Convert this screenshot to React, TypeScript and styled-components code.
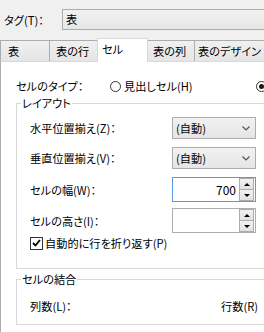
import React from "react";
import styled, { createGlobalStyle } from "styled-components";

const GlobalStyle = createGlobalStyle`
    html, body {
        margin: 0;
        padding: 0;
        background: #f0f0f0;
    }
    body {
        font-family: "Noto Sans CJK JP", "Noto Sans", sans-serif;
        font-size: 11.2px;
        line-height: 16px;
        color: #000;
        font-feature-settings: "palt";
    }
`;

const Window = styled.div`
    width: 264px;
    height: 332px;
    overflow: hidden;
    display: flex;
    flex-direction: column;
    background: #f0f0f0;
`;

const TagRow = styled.div`
    display: flex;
    align-items: center;
    height: 21px;
    margin-top: 9px;
    padding-left: 4px;
`;

const TagLabel = styled.span`
    flex: 0 0 58px;
`;

const TagBox = styled.div`
    flex: 0 0 240px;
    height: 21px;
    box-sizing: border-box;
    border: 1px solid #acacac;
    background: linear-gradient(#f2f2f2, #e6e6e6);
    padding-left: 3px;
    line-height: 19px;
`;

const TabStrip = styled.div`
    display: flex;
    align-items: flex-end;
    height: 23px;
    margin-top: 8px;
    position: relative;
    z-index: 1;
`;

const Tab = styled.div<{ $w: number; $pad: number; $active?: boolean }>`
    flex: 0 0 ${(p) => p.$w}px;
    box-sizing: border-box;
    height: ${(p) => (p.$active ? 24 : 21)}px;
    margin-right: -1px;
    margin-bottom: ${(p) => (p.$active ? -1 : 0)}px;
    padding-left: ${(p) => p.$pad}px;
    border: 1px solid ${(p) => (p.$active ? "#d9d9d9" : "#acacac")};
    border-bottom: none;
    background: ${(p) => (p.$active ? "#fff" : "linear-gradient(#f0f0f0, #e5e5e5)")};
    line-height: ${(p) => (p.$active ? 20 : 21)}px;
    white-space: nowrap;
    position: relative;
    z-index: ${(p) => (p.$active ? 2 : 1)};
`;

const Panel = styled.div`
    flex: 1;
    background: #fff;
    border-top: 1px solid #d9d9d9;
    border-left: 1px solid #acacac;
    padding: 14px 0 0 15px;
    width: 300px;
`;

const TypeRow = styled.div`
    display: flex;
    align-items: center;
    height: 20px;
`;

const TypeLabel = styled.span`
    flex: 0 0 94px;
`;

const RadioOption = styled.label<{ $w?: number }>`
    display: flex;
    align-items: center;
    gap: 3px;
    flex: 0 0 ${(p) => (p.$w ? `${p.$w}px` : "auto")};
`;

const RadioCircle = styled.span<{ $checked?: boolean }>`
    width: 11px;
    height: 11px;
    box-sizing: border-box;
    border: 1px solid #333;
    border-radius: 50%;
    background: #fff;
    display: flex;
    align-items: center;
    justify-content: center;
    &::after {
        content: "";
        display: ${(p) => (p.$checked ? "block" : "none")};
        width: 5px;
        height: 5px;
        border-radius: 50%;
        background: #1a1a1a;
    }
`;

const Group = styled.fieldset<{ $top?: number }>`
    margin: ${(p) => p.$top ?? 0}px 0 0 0;
    padding: 0;
    width: 280px;
    border: 1px solid #d9d9d9;
    min-inline-size: 0;
`;

const Legend = styled.legend`
    margin-left: 4px;
    padding: 0 1px;
    line-height: 14px;
`;

const GroupBody = styled.div<{ $pt: number; $pb: number }>`
    padding: ${(p) => p.$pt}px 0 ${(p) => p.$pb}px 13px;
`;

const FieldRow = styled.div<{ $mt?: number; $cols?: string }>`
    display: grid;
    grid-template-columns: ${(p) => p.$cols ?? "142px 84px"};
    align-items: center;
    margin-top: ${(p) => p.$mt ?? 0}px;
`;

const Select = styled.div`
    height: 22px;
    box-sizing: border-box;
    border: 1px solid #acacac;
    background: linear-gradient(#f2f2f2, #e5e5e5);
    padding-left: 3px;
    display: flex;
    align-items: center;
    justify-content: space-between;
    padding-right: 5px;
`;

const SpinBox = styled.div<{ $focused?: boolean }>`
    height: 25px;
    box-sizing: border-box;
    border: 1px solid ${(p) => (p.$focused ? "#569de5" : "#abadb3")};
    background: #fff;
    display: flex;
    padding: 0 1px 0 0;
`;

const SpinValue = styled.div`
    flex: 1;
    text-align: right;
    padding-right: 3px;
    line-height: 23px;
    font-size: 12px;
`;

const SpinButtons = styled.div`
    flex: 0 0 15px;
    display: flex;
    flex-direction: column;
`;

const SpinButton = styled.div`
    flex: 1;
    box-sizing: border-box;
    border: 1px solid #acacac;
    background: linear-gradient(#f2f2f2, #e2e2e2);
    display: flex;
    align-items: center;
    justify-content: center;
    & + & {
        margin-top: -1px;
    }
`;

const CheckRow = styled.label`
    display: flex;
    align-items: center;
    gap: 2px;
    height: 14px;
    margin-top: 3px;
`;

const CheckBox = styled.span`
    width: 13px;
    height: 13px;
    box-sizing: border-box;
    border: 1px solid #333;
    background: #fff;
    display: flex;
    align-items: center;
    justify-content: center;
`;

const Chevron = () => (
    <svg width="8" height="5" viewBox="0 0 8 5">
        <path d="M0.5 0.5 L4 4 L7.5 0.5" fill="none" stroke="#555" strokeWidth="1.2" />
    </svg>
);

const Triangle = ({ up }: { up?: boolean }) => (
    <svg width="6" height="3" viewBox="0 0 6 3">
        <path d={up ? "M0 3 L3 0 L6 3 Z" : "M0 0 L3 3 L6 0 Z"} fill="#000" />
    </svg>
);

const Spin = ({ value, focused }: { value?: string; focused?: boolean }) => (
    <SpinBox $focused={focused}>
        <SpinValue>{value}</SpinValue>
        <SpinButtons>
            <SpinButton>
                <Triangle up />
            </SpinButton>
            <SpinButton>
                <Triangle />
            </SpinButton>
        </SpinButtons>
    </SpinBox>
);

const tabs = [
    { label: "表", w: 50, pad: 7 },
    { label: "表の行", w: 49, pad: 6 },
    { label: "セル", w: 51, pad: 4, active: true },
    { label: "表の列", w: 48, pad: 5 },
    { label: "表のデザイン", w: 80, pad: 3 },
];

const App = (): JSX.Element => {
    return (
        <Window>
            <GlobalStyle />
            <TagRow>
                <TagLabel>タグ(T)：</TagLabel>
                <TagBox>表</TagBox>
            </TagRow>
            <TabStrip>
                {tabs.map((t) => (
                    <Tab key={t.label} $w={t.w} $pad={t.pad} $active={t.active}>
                        {t.label}
                    </Tab>
                ))}
            </TabStrip>
            <Panel>
                <TypeRow>
                    <TypeLabel>セルのタイプ：</TypeLabel>
                    <RadioOption $w={146}>
                        <RadioCircle />
                        見出しセル(H)
                    </RadioOption>
                    <RadioOption>
                        <RadioCircle $checked />
                    </RadioOption>
                </TypeRow>
                <Group>
                    <Legend>レイアウト</Legend>
                    <GroupBody $pt={7} $pb={18}>
                        <FieldRow>
                            <span>水平位置揃え(Z)：</span>
                            <Select>
                                (自動)
                                <Chevron />
                            </Select>
                        </FieldRow>
                        <FieldRow $mt={8}>
                            <span>垂直位置揃え(V)：</span>
                            <Select>
                                (自動)
                                <Chevron />
                            </Select>
                        </FieldRow>
                        <FieldRow $mt={8}>
                            <span>セルの幅(W)：</span>
                            <Spin value="700" focused />
                        </FieldRow>
                        <FieldRow $mt={6}>
                            <span>セルの高さ(I)：</span>
                            <Spin />
                        </FieldRow>
                        <CheckRow>
                            <CheckBox>
                                <svg width="9" height="8" viewBox="0 0 9 8">
                                    <path d="M1 4 L3.5 6.5 L8 1" fill="none" stroke="#000" strokeWidth="1.8" />
                                </svg>
                            </CheckBox>
                            自動的に行を折り返す(P)
                        </CheckRow>
                    </GroupBody>
                </Group>
                <Group $top={3}>
                    <Legend>セルの結合</Legend>
                    <GroupBody $pt={12} $pb={10}>
                        <FieldRow $cols="191px auto">
                            <span>列数(L)：</span>
                            <span>行数(R)</span>
                        </FieldRow>
                    </GroupBody>
                </Group>
            </Panel>
        </Window>
    );
};

export default App;
